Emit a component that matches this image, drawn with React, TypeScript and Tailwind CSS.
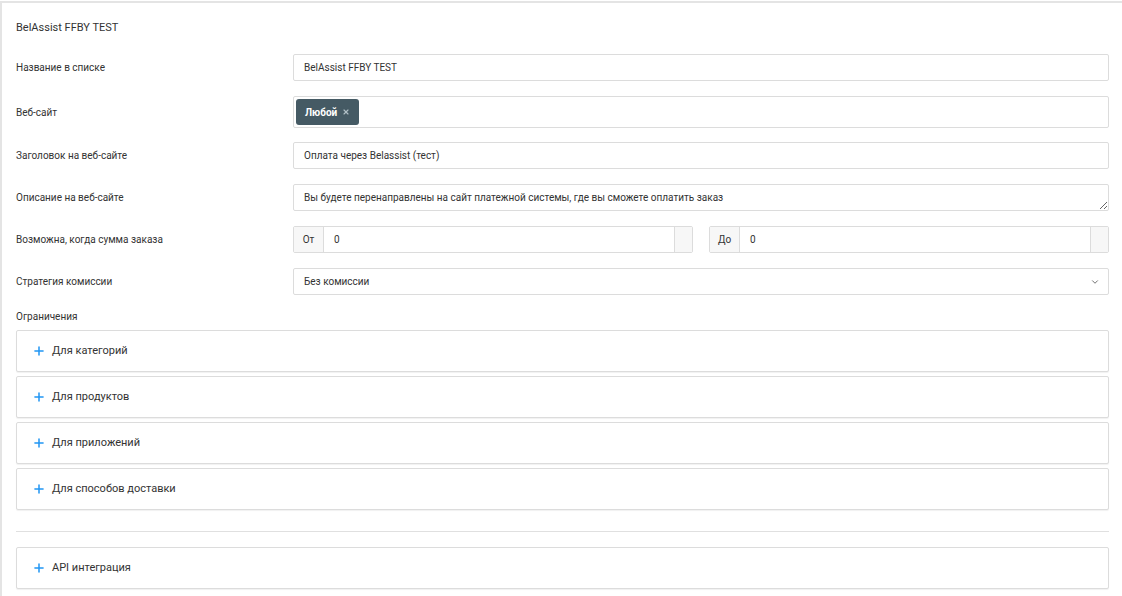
import { Plus, ChevronDown, X } from 'lucide-react';

const font = { fontFamily: 'Roboto, "Noto Sans", sans-serif' };

const Row = ({ label, children, tall }: { label: string; children: React.ReactNode; tall?: boolean }) => (
  <div className={`mb-[15px] flex items-center ${tall ? 'h-[32px]' : 'h-[27px]'}`}>
    <div className="w-[277px] shrink-0 text-[10px] text-[#333]">{label}</div>
    <div className="h-full flex-1">{children}</div>
  </div>
);

const Input = ({ value }: { value: string }) => (
  <div className="flex h-full items-center rounded-[2px] border border-[#dcdcdc] bg-white px-[10px] text-[10px] text-[#333]">
    {value}
  </div>
);

const RangeInput = ({ prefix }: { prefix: string }) => (
  <div className="flex h-full rounded-[2px] border border-[#dcdcdc] text-[10px] text-[#333]">
    <div className="flex w-[30px] items-center justify-center border-r border-[#dcdcdc] bg-[#f7f7f7]">{prefix}</div>
    <div className="flex flex-1 items-center px-[10px]">0</div>
    <div className="w-[18px] border-l border-[#dcdcdc] bg-[#f7f7f7]"></div>
  </div>
);

const Accordion = ({ title }: { title: string }) => (
  <div className="flex h-[42px] items-center rounded-[2px] border border-[#dcdcdc] bg-white pl-[15px] shadow-[0_1px_1px_rgba(0,0,0,0.06)]">
    <Plus size={14} strokeWidth={2.6} className="text-[#2196f3]" />
    <span className="ml-[6px] text-[11px] text-[#333]">{title}</span>
  </div>
);

export default function App() {
  return (
    <div className="h-[596px] w-[1122px] overflow-hidden bg-white" style={font}>
      <div className="mt-[1px] h-full border-l-2 border-t-2 border-[#e4e4e4] pl-[14px] pr-[13px] pt-[15px]">
        <div className="mb-[16px] flex h-[20px] items-center text-[11px] text-[#333]">BelAssist FFBY TEST</div>

        <Row label="Название в списке">
          <Input value="BelAssist FFBY TEST" />
        </Row>

        <Row label="Веб-сайт" tall>
          <div className="flex h-full items-center rounded-[2px] border border-[#dcdcdc] bg-white px-[2px]">
            <span className="flex h-[26px] items-center gap-[5px] rounded-[3px] bg-[#455a64] px-[9px] text-[10px] font-bold text-white">
              Любой
              <X size={8} strokeWidth={3.5} className="text-[#b0bec5]" />
            </span>
          </div>
        </Row>

        <div className="-mt-px">
          <Row label="Заголовок на веб-сайте">
            <Input value="Оплата через Belassist (тест)" />
          </Row>
        </div>

        <Row label="Описание на веб-сайте">
          <textarea
            readOnly
            rows={1}
            defaultValue="Вы будете перенаправлены на сайт платежной системы, где вы сможете оплатить заказ"
            className="block h-full w-full resize-y overflow-hidden rounded-[2px] border border-[#dcdcdc] bg-white px-[10px] py-[7px] text-[10px] leading-[12px] text-[#333] outline-none"
          />
        </Row>

        <Row label="Возможна, когда сумма заказа">
          <div className="grid h-full grid-cols-2 gap-[16px]">
            <RangeInput prefix="От" />
            <RangeInput prefix="До" />
          </div>
        </Row>

        <Row label="Стратегия комиссии">
          <div className="flex h-full items-center justify-between rounded-[2px] border border-[#dcdcdc] bg-white pl-[10px] pr-[8px] text-[10px] text-[#333]">
            Без комиссии
            <ChevronDown size={10} strokeWidth={2} className="text-[#555]" />
          </div>
        </Row>

        <div className="mb-[6px] mt-[8px] text-[10px] leading-[14px] text-[#333]">Ограничения</div>

        <div className="flex flex-col gap-[4px]">
          <Accordion title="Для категорий" />
          <Accordion title="Для продуктов" />
          <Accordion title="Для приложений" />
          <Accordion title="Для способов доставки" />
        </div>

        <div className="mb-[15px] mt-[21px] border-t border-[#e0e0e0]"></div>

        <Accordion title="API интеграция" />
      </div>
    </div>
  );
}
